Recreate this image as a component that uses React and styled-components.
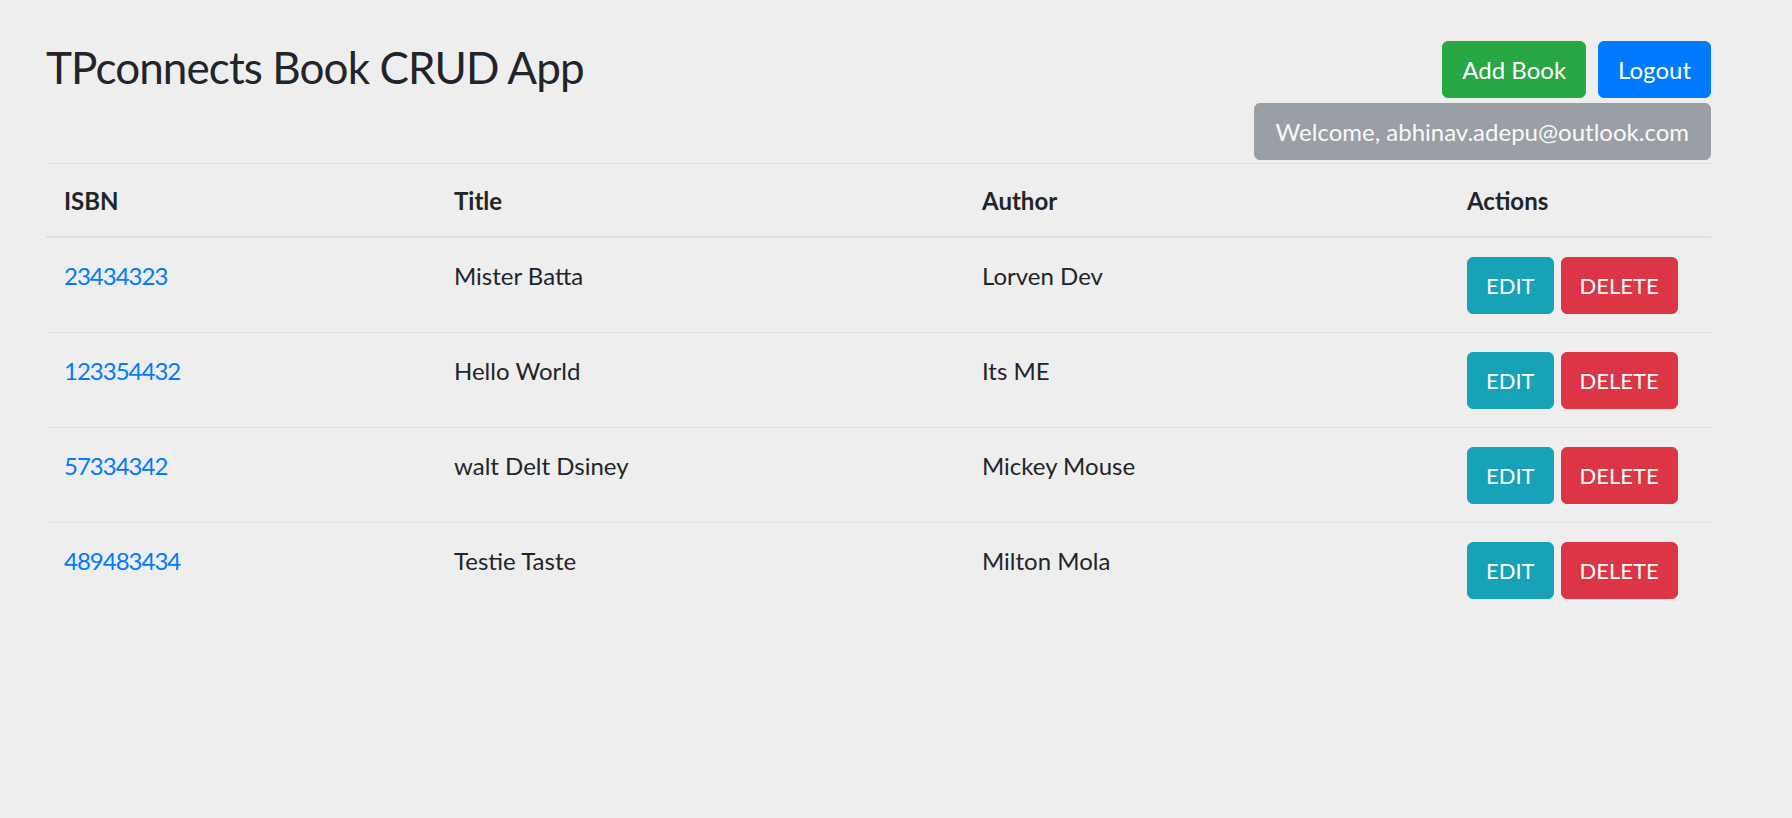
import React from 'react';
import styled, { createGlobalStyle } from 'styled-components';

const GlobalStyle = createGlobalStyle`
  html, body {
    margin: 0;
    padding: 0;
    background: #eeeeee;
  }
  body {
    font-family: Lato, "Open Sans", sans-serif;
    font-size: 24px;
    line-height: 1.5;
    color: #212529;
  }
  * {
    box-sizing: border-box;
  }
`;

const Page = styled.div`
  padding: 41px 81px 60px 46px;
  min-height: 818px;
`;

const Header = styled.div`
  display: flex;
  justify-content: space-between;
  align-items: flex-start;
`;

const Heading = styled.h1`
  margin: 0;
  font-size: 44px;
  font-weight: 400;
  letter-spacing: -0.9px;
  line-height: 52px;
  color: #212529;
`;

const HeaderRight = styled.div`
  display: flex;
  flex-direction: column;
  align-items: flex-end;
  gap: 5px;
`;

const ButtonRow = styled.div`
  display: flex;
  gap: 12px;
`;

const Button = styled.button`
  font-family: inherit;
  font-size: ${({ small }) => (small ? '22px' : '24px')};
  line-height: 37px;
  padding: 9px ${({ small }) => (small ? '18px' : '19px')};
  border: 1px solid ${({ bg }) => bg};
  border-radius: 6px;
  background: ${({ bg }) => bg};
  color: #ffffff;
  text-transform: ${({ upper }) => (upper ? 'uppercase' : 'none')};
  cursor: pointer;
`;

const Welcome = styled(Button)`
  padding: 9px 21px;
  opacity: 0.65;
  cursor: default;
`;

const Table = styled.table`
  width: 100%;
  margin-top: 3px;
  border-collapse: collapse;
`;

const Th = styled.th`
  text-align: left;
  font-weight: 700;
  padding: 19px 18px 17px;
  border-top: 1px solid #dee2e6;
  border-bottom: 2px solid #dee2e6;
  width: ${({ w }) => w || 'auto'};
`;

const Td = styled.td`
  padding: 20px 18px 16px;
  vertical-align: top;
  border-top: ${({ first }) => (first ? 'none' : '1px solid #dee2e6')};
`;

const IsbnLink = styled.a`
  color: #007bff;
  letter-spacing: -1px;
  text-decoration: none;
`;

const Actions = styled.div`
  display: flex;
  gap: 7px;
  margin: -1px 0 2px;
`;

const books = [
  { isbn: '23434323', title: 'Mister Batta', author: 'Lorven Dev' },
  { isbn: '123354432', title: 'Hello World', author: 'Its ME' },
  { isbn: '57334342', title: 'walt Delt Dsiney', author: 'Mickey Mouse' },
  { isbn: '489483434', title: 'Testie Taste', author: 'Milton Mola' },
];

const App = () => {
  return (
    <>
      <GlobalStyle />
      <Page>
        <Header>
          <Heading>TPconnects Book CRUD App</Heading>
          <HeaderRight>
            <ButtonRow>
              <Button bg="#28a745">Add Book</Button>
              <Button bg="#007bff">Logout</Button>
            </ButtonRow>
            <Welcome bg="#6c757d" disabled>Welcome, abhinav.adepu@outlook.com</Welcome>
          </HeaderRight>
        </Header>
        <Table>
          <thead>
            <tr>
              <Th w="390px">ISBN</Th>
              <Th w="528px">Title</Th>
              <Th w="485px">Author</Th>
              <Th>Actions</Th>
            </tr>
          </thead>
          <tbody>
            {books.map((book, index) => (
              <tr key={book.isbn}>
                <Td first={index === 0}>
                  <IsbnLink href="#">{book.isbn}</IsbnLink>
                </Td>
                <Td first={index === 0}>{book.title}</Td>
                <Td first={index === 0}>{book.author}</Td>
                <Td first={index === 0}>
                  <Actions>
                    <Button bg="#17a2b8" upper small>Edit</Button>
                    <Button bg="#dc3545" upper small>Delete</Button>
                  </Actions>
                </Td>
              </tr>
            ))}
          </tbody>
        </Table>
      </Page>
    </>
  );
};

export default App;
